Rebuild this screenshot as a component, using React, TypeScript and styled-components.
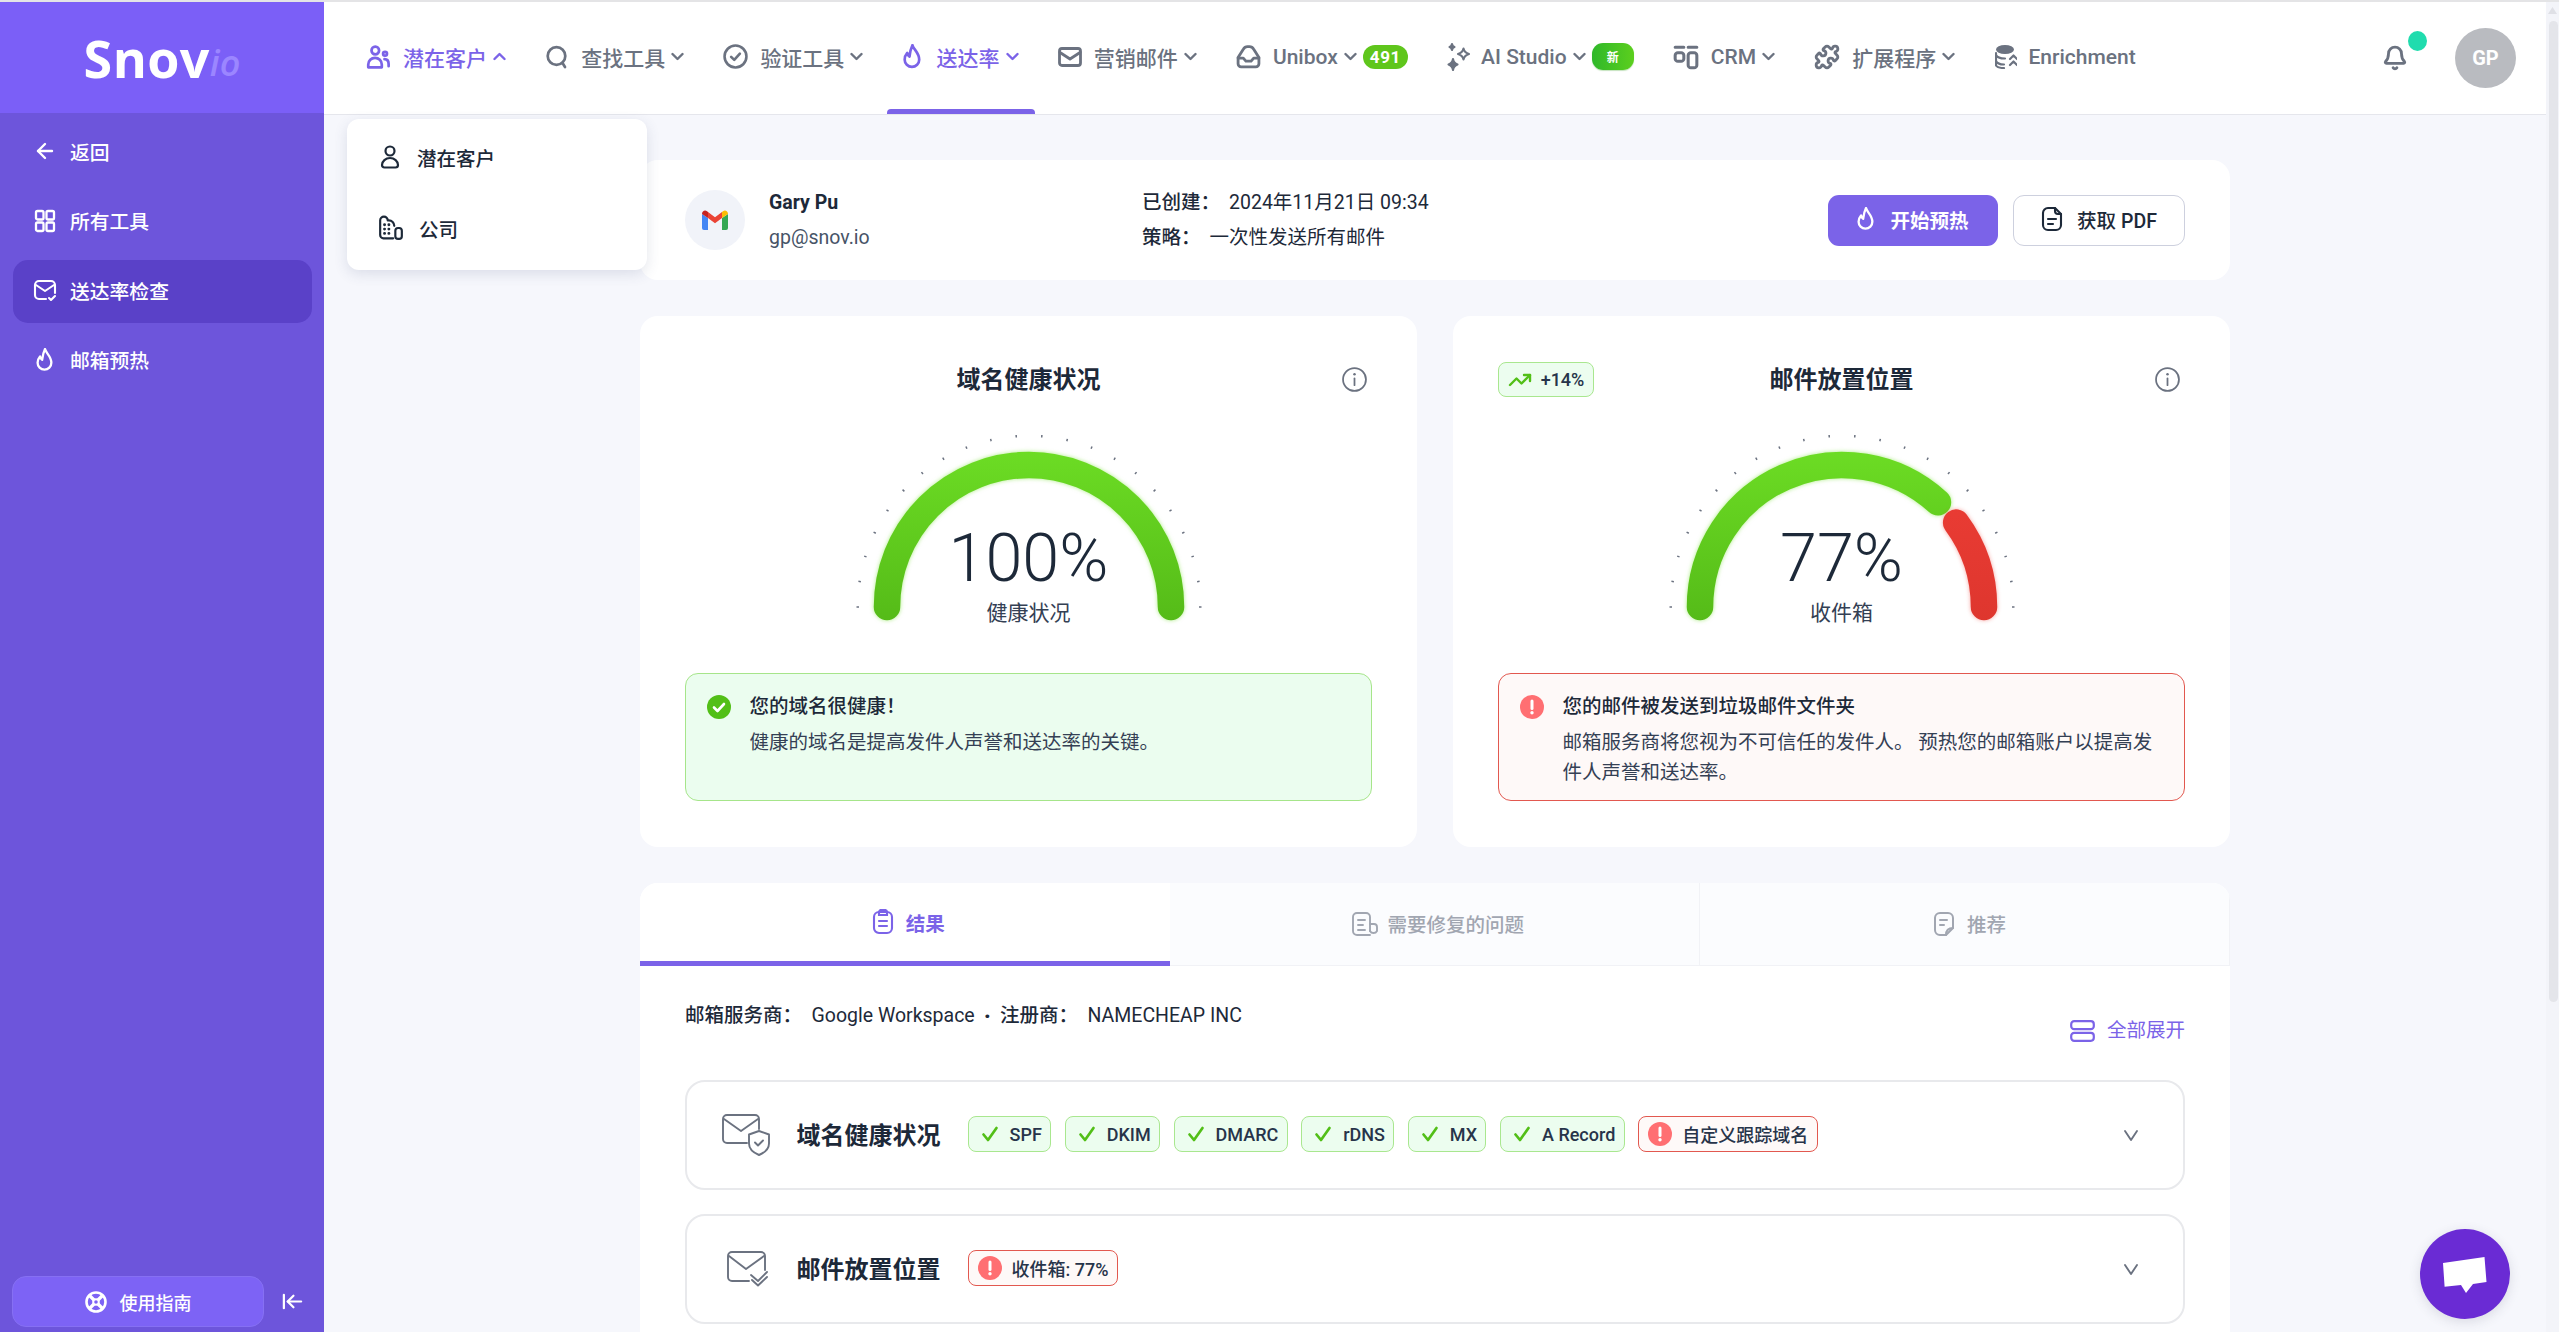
import React from 'react';
import styled, { createGlobalStyle } from 'styled-components';
import { ArrowLeft, ArrowLeftToLine, Bell, Puzzle, TrendingUp } from 'lucide-react';

const FONT = `Roboto, "Noto Sans CJK SC", "Noto Sans", sans-serif`;
const PURPLE = '#7b63e8';
const INK = '#1d2939';
const GREY = '#6b7280';

const Global = createGlobalStyle`
  html, body { margin: 0; padding: 0; height: 100%; overflow: hidden; background: #f6f7fc; }
  #root { height: 100%; }
  * { box-sizing: border-box; }
  body { font-family: ${FONT}; color: ${INK}; }
`;

const Page = styled.div`
  display: flex; flex-direction: column; height: 100vh; overflow: hidden; position: relative;
`;
const TopEdge = styled.div`height: 2px; flex: none; background: #e4e4e6;`;
const Shell = styled.div`display: flex; flex: 1; min-height: 0;`;

/* sidebar */
const Sidebar = styled.aside`
  width: 324px; flex: none; display: flex; flex-direction: column; background: #6d55db;
`;
const LogoBar = styled.div`
  height: 111px; flex: none; background: #7b5ff7; display: flex; align-items: center; justify-content: center;
`;
const LogoMain = styled.span`
  font-family: "Open Sans", sans-serif; font-weight: 700; font-size: 52px; line-height: 1; color: #fff; letter-spacing: .4px;
`;
const LogoIo = styled.span`
  font-family: "Open Sans", sans-serif; font-style: italic; font-weight: 600; font-size: 36px; line-height: 1;
  color: #9b86ff; align-self: flex-end; margin-bottom: 32px;
`;
const SideList = styled.nav`display: flex; flex-direction: column; gap: 6.5px; padding: 8px 12.5px 0;`;
const SideRow = styled.div<{ $active?: boolean }>`
  height: 63px; display: flex; align-items: center; gap: 13.5px; padding: 0 0 3px 20px; border-radius: 15px;
  color: #fff; font-size: 19.8px; font-weight: 500; background: ${p => (p.$active ? '#5a41c8' : 'transparent')};
`;
const SideIcon = styled.span`width: 24px; flex: none; display: flex; justify-content: center;`;
const SideFoot = styled.div`
  margin-top: auto; display: flex; align-items: center; gap: 17px; padding: 0 0 5px 12px;
`;
const GuideButton = styled.div`
  width: 252px; height: 51px; display: flex; align-items: center; justify-content: center; gap: 13px; border-radius: 14px;
  background: #7d63f5; border: 1px solid #8670f3; color: #fff; font-size: 18px; font-weight: 500;
`;
const Collapse = styled.div`color: #fff; display: flex;`;

/* main column */
const MainCol = styled.div`flex: 1; min-width: 0; display: flex; flex-direction: column; position: relative;`;
const TopNav = styled.header`
  height: 113px; flex: none; background: #fff; border-bottom: 1.5px solid #e5e6ec; display: flex; align-items: stretch; padding-left: 25px; position: relative;
`;
const NavItems = styled.div`display: flex; align-items: stretch; gap: 7.2px;`;
const NavItem = styled.div<{ $active?: boolean; $open?: boolean }>`
  position: relative; display: flex; align-items: center; padding: 0 16px 3px;
  color: ${p => (p.$active || p.$open ? PURPLE : GREY)}; font-size: 21px; font-weight: 500; white-space: nowrap;
  svg { flex: none; }
  ${p => p.$active && `&::after { content: ''; position: absolute; left: 0; right: 0; bottom: 0; height: 5px; background: ${PURPLE}; border-radius: 4px 4px 0 0; }`}
`;
const NavLabel = styled.span<{ $gap?: number }>`margin-left: ${p => p.$gap ?? 12}px;`;
const NavCaret = styled.svg`margin-left: 6px;`;
const CountBadge = styled.span`
  margin-left: 6px; height: 24px; padding: 0 7px; border-radius: 12px; background: #5fc61c; color: #fff; font-size: 17px; font-weight: 700;
  letter-spacing: .6px; display: flex; align-items: center;
`;
const NewBadge = styled.span`
  margin-left: 6px; width: 42px; height: 27px; border-radius: 11px; background: linear-gradient(90deg,#2fb82a,#5ccf1e); color: #fff;
  font-size: 12px; font-weight: 700; display: flex; align-items: center; justify-content: center; box-shadow: 0 1px 1px rgba(60,160,40,.3);
`;
const NavRight = styled.div`margin-left: auto; margin-right: 30px; display: flex; align-items: center; gap: 47px; color: ${GREY};`;
const BellBox = styled.div`position: relative; display: flex;`;
const BellDot = styled.span`position: absolute; top: -14px; right: -19px; width: 19px; height: 20px; border-radius: 50%; background: #20dcae;`;
const Avatar = styled.div`
  width: 61px; height: 60px; border-radius: 50%; background: #b9bbc0; color: #fff; font-weight: 700; font-size: 20px; display: flex; align-items: center; justify-content: center;
`;

const Dropdown = styled.div`
  position: absolute; top: 117px; left: 23px; width: 300px; height: 151px; background: #fff; border-radius: 12px;
  box-shadow: 0 4px 14px rgba(60,70,110,.14); display: flex; flex-direction: column; padding-top: 4px; z-index: 5;
`;
const DropRow = styled.div`
  height: 71px; display: flex; align-items: center; gap: 15px; padding: 0 0 3px 31px; font-size: 19.5px; font-weight: 500; color: ${INK};
`;

const Content = styled.main`flex: 1; min-height: 0; padding: 45px 0 0 316px; overflow: hidden;`;
const Column = styled.div`width: 1590px; display: flex; flex-direction: column;`;

const HeaderCard = styled.section`
  height: 120px; background: #fff; border-radius: 18px; display: flex; align-items: center; padding: 0 45px; font-size: 19.5px;
`;
const AccountLogo = styled.div`
  width: 60px; height: 60px; border-radius: 50%; background: #f1f3f9; display: flex; align-items: center; justify-content: center; flex: none;
`;
const Account = styled.div`margin-left: 24px; width: 373px; display: flex; flex-direction: column; gap: 6px; line-height: 29px;`;
const AccountName = styled.div`font-weight: 700;`;
const AccountMail = styled.div`color: #475467;`;
const Meta = styled.div`display: flex; flex-direction: column; gap: 6px; line-height: 29px;`;
const MetaLine = styled.div`display: flex;`;
const MetaLabel = styled.span`font-weight: 500;`;
const MetaValue = styled.span<{ $gap: number }>`margin-left: ${p => p.$gap}px; color: ${INK};`;
const Actions = styled.div`margin-left: auto; display: flex; gap: 15px;`;
const Button = styled.div<{ $primary?: boolean }>`
  height: 51px; display: flex; align-items: center; justify-content: center; gap: ${p => (p.$primary ? 15 : 14)}px; border-radius: 11px; font-size: 19.5px; padding-bottom: 2px;
  font-weight: ${p => (p.$primary ? 700 : 500)};
  width: ${p => (p.$primary ? 170 : 172)}px;
  background: ${p => (p.$primary ? PURPLE : '#fff')}; color: ${p => (p.$primary ? '#fff' : INK)};
  border: ${p => (p.$primary ? 'none' : '1.5px solid #cdd0de')};
`;

const GaugeRow = styled.div`display: grid; grid-template-columns: 777px 777px; gap: 36px; margin-top: 36px;`;
const GaugeCard = styled.section`height: 531px; background: #fff; border-radius: 18px; padding: 44px 45px 0; display: flex; flex-direction: column;`;
const GaugeHead = styled.div`display: grid; grid-template-columns: 1fr auto 1fr; align-items: center; height: 36px;`;
const GaugeTitle = styled.h2`margin: 0 0 4px; font-size: 24px; font-weight: 700; color: ${INK};`;
const HeadRight = styled.div`justify-self: end; display: flex; color: ${GREY}; margin-right: 5px;`;
const Trend = styled.div`
  justify-self: start; height: 35px; width: 96px; display: flex; align-items: center; justify-content: center; gap: 9px; border-radius: 8px;
  background: #ecfdef; border: 1px solid #a9e78f; font-size: 18px; font-weight: 500; color: #27344a;
`;
const GaugeWrap = styled.div`position: relative; width: 360px; height: 205px; align-self: center; margin-top: 29px;`;
const GaugeValue = styled.div`
  position: absolute; left: 0; right: 0; top: 93px; text-align: center; font-size: 66.5px; font-weight: 300; line-height: 80px; color: ${INK};
`;
const GaugeLabel = styled.div`
  position: absolute; left: 0; right: 0; top: 172.5px; text-align: center; font-size: 21px; line-height: 30px; color: #344054;
`;
const Alert = styled.div<{ $bad?: boolean }>`
  margin-top: 43px; height: 128px; border-radius: 13px; padding: 18px 22px 0 21px; display: grid; grid-template-columns: 24px 1fr; column-gap: 18.5px;
  background: ${p => (p.$bad ? '#fef9f8' : '#ebfdef')}; border: 1.5px solid ${p => (p.$bad ? '#e2584f' : '#a6e58a')};
  font-size: 19.5px; line-height: 30px; color: #344054;
`;
const AlertIcon = styled.div`display: flex; align-items: center; height: 30px;`;
const AlertTitle = styled.div`font-weight: 500; color: ${INK}; margin-bottom: 6px;`;

const Results = styled.section`margin-top: 36px; background: #fff; border-radius: 18px 18px 0 0; overflow: hidden; padding-bottom: 40px;`;
const Tabs = styled.div`display: grid; grid-template-columns: 530px 530px 1fr; height: 83px;`;
const Tab = styled.div<{ $active?: boolean; $shift?: number; $gap?: number }>`
  display: flex; align-items: center; justify-content: center; gap: ${p => p.$gap ?? 12}px; font-size: 19.5px;
  font-weight: ${p => (p.$active ? 700 : 500)}; padding: 0 0 ${p => (p.$active ? 0 : 1)}px ${p => p.$shift ?? 6.5}px;
  color: ${p => (p.$active ? PURPLE : '#a1a6b1')};
  background: ${p => (p.$active ? '#fff' : '#fbfcfe')};
  border-bottom: ${p => (p.$active ? `5px solid ${PURPLE}` : '1.5px solid #f1f2f6')};
  border-right: ${p => (p.$active ? 'none' : '1px solid #f1f2f6')};
`;
const ResultsBody = styled.div`padding: 0 45px;`;
const ProviderRow = styled.div`height: 114px; display: flex; justify-content: space-between; align-items: flex-start; padding-top: 35px; font-size: 19.5px; line-height: 30px;`;
const Provider = styled.div`display: flex;`;
const ProviderLabel = styled.span`font-weight: 500;`;
const ProviderValue = styled.span`margin-left: 9.5px;`;
const ProviderDot = styled.span`margin: 0 9px; font-weight: 700; font-size: 24px;`;
const ExpandAll = styled.div`display: flex; align-items: center; gap: 12px; color: ${PURPLE}; margin-top: 15px;`;
const AccordionList = styled.div`display: flex; flex-direction: column; gap: 24px;`;
const Accordion = styled.div`
  height: 110px; border: 2px solid #e8e9ec; border-radius: 20px; display: flex; align-items: center; padding-left: 35px; padding-right: 40px; background: #fff;
`;
const AccIcon = styled.div<{ $inset?: number }>`width: 74.5px; flex: none; display: flex; padding-left: ${p => p.$inset ?? 0}px;`;
const AccTitle = styled.h3`margin: 0 27px 4px 0; font-size: 24px; font-weight: 700; color: ${INK}; white-space: nowrap;`;
const Pills = styled.div`display: flex; gap: 13.6px; margin-bottom: 2px;`;
const Pill = styled.span<{ $bad?: boolean }>`
  height: 36px; display: flex; align-items: center; gap: ${p => (p.$bad ? 10 : 11)}px; padding: 0 ${p => (p.$bad ? 9 : 8.3)}px 0 ${p => (p.$bad ? 9 : 12)}px;
  border-radius: 8px; font-size: 18px; font-weight: 500; color: #27344a; white-space: nowrap;
  background: ${p => (p.$bad ? '#fef9f8' : '#ecfdef')}; border: 1.5px solid ${p => (p.$bad ? '#e2584f' : '#a9e78f')};
`;
const AccCaret = styled.div`margin-left: auto; display: flex; color: ${GREY};`;

const Scrollbar = styled.div`width: 13px; flex: none; background: #f3f4f9; display: flex; flex-direction: column; align-items: center; padding-top: 5px;`;
const ScrollThumb = styled.div`width: 9px; height: 981px; margin-top: 7px; border-radius: 5px; background: #e4e5ea; margin-left: 1px;`;
const ChatButton = styled.div`
  position: absolute; left: 2420px; top: 1229px; width: 90px; height: 90px; border-radius: 50%; background: #6a2bd4; box-shadow: 0 3px 12px rgba(60,60,90,.15); display: flex;
`;

/* icons */
const Ico: React.FC<{ s?: number; sw?: number; children: React.ReactNode }> = ({ s = 24, sw = 2, children }) => (
  <svg width={s} height={s} viewBox="0 0 24 24" fill="none" stroke="currentColor" strokeWidth={sw} strokeLinecap="round" strokeLinejoin="round">{children}</svg>
);
const Caret = ({ up }: { up?: boolean }) => (
  <NavCaret width="13" height="9" viewBox="0 0 13 9" fill="none" stroke="currentColor" strokeWidth="2.4" strokeLinecap="round" strokeLinejoin="round">
    <path d={up ? 'M1.5 7 6.5 2l5 5' : 'M1.5 2l5 5 5-5'} />
  </NavCaret>
);
const FlameIcon = ({ w = 19, sw = 2.2 }: { w?: number; sw?: number }) => (
  <svg width={w} height={(w * 22) / 17} viewBox="4 1 17 22" fill="none" stroke="currentColor" strokeWidth={sw} strokeLinecap="round" strokeLinejoin="round">
    <path d="M12.500 2c.6 3.600 6 6.600 6 13a6.500 6.500 0 0 1-13 0c0-2.500 1-4.500 2.300-6 .3 1.500 1 2.600 2 3.200C10.200 9 11 5 12.500 2z" />
  </svg>
);
const UsersIcon = () => (
  <Ico s={26} sw={2.500}><circle cx="9.500" cy="6" r="3.500" /><path d="M3 21.500v-2.500a6 6 0 0 1 12.500 0v2.500H3z" /><circle cx="18.500" cy="9" r="1.800" /><path d="M18 14c2.500 0 3.800 1.800 3.800 4.500v2" /></Ico>
);
const SearchIcon = () => <Ico s={24} sw={2.700}><circle cx="11.500" cy="11" r="8.800" /><path d="M17.500 18l2.500 4" /></Ico>;
const VerifyIcon = () => <Ico s={25} sw={2.500}><circle cx="12" cy="12" r="10.500" /><path d="M7.800 12.300l3 3 5.400-6" /></Ico>;
const MailIcon = () => <Ico s={24} sw={2.800}><rect x="1.500" y="3.500" width="21" height="17" rx="2.500" /><path d="M2 7.500l10 6.500 10-6.500" /></Ico>;
const UniboxIcon = () => <Ico s={25} sw={2.700}><path d="M2 13 7 5c1-1.700 2-2.500 4-2.500h2c2 0 3 .8 4 2.500l5 8v6a3 3 0 0 1-3 3H5a3 3 0 0 1-3-3v-6z" /><path d="M2 13.500h5l2.500 3h5l2.500-3h5" /></Ico>;
const SparkIcon = () => (
  <svg width="25" height="29" viewBox="0 0 25 29" fill="none" stroke="currentColor" strokeWidth="2.100" strokeLinejoin="round">
    <path d="M16.500 6.500c.7 3 2 4.500 5.500 5.500-3.500 1-4.800 2.500-5.500 5.500-.7-3-2-4.500-5.500-5.500 3.500-1 4.800-2.500 5.500-5.500z" />
    <path fill="currentColor" d="M6 17c.5 3 1.500 4.500 4.500 5.500C7.500 23.500 6.500 25 6 28c-.5-3-1.500-4.500-4.500-5.500C4.500 21.500 5.500 20 6 17z" />
    <path fill="currentColor" d="M5 2c.3 1.700.8 2.500 2.500 3-1.700.5-2.200 1.300-2.500 3-.3-1.700-.8-2.500-2.500-3C4.200 4.500 4.700 3.700 5 2z" />
  </svg>
);
const CrmIcon = () => <Ico s={26} sw={2.800}><path d="M2 3h8M14 3h8" /><rect x="2" y="8" width="8" height="8" rx="2.500" /><rect x="14" y="8" width="8" height="14" rx="2.500" /></Ico>;
const EnrichIcon = () => (
  <svg width="22" height="25" viewBox="0 0 22 25" fill="none" stroke="currentColor" strokeWidth="2.200" strokeLinecap="round" strokeLinejoin="round">
    <ellipse cx="10" cy="5.500" rx="9" ry="4.500" fill="currentColor" stroke="none" />
    <path d="M1 11c1 2.500 5 3.500 9 3.500M1 17c1 2.500 5 3.500 8 3.500M1 9v12.500c1 1.500 4 2.500 8 2.500" />
    <path d="M15 15l3.500-3.500L22 15M15 21l3.500-3.500L22 21" />
  </svg>
);
const UserIcon = () => <Ico s={24} sw={2.200}><circle cx="12" cy="6" r="4.500" /><path d="M4 20a8 7 0 0 1 16 0c0 1.500-.8 2.500-2.500 2.500h-11C4.800 22.500 4 21.500 4 20z" /></Ico>;
const BuildingIcon = () => (
  <Ico s={26} sw={2}><path d="M14 21.500H5a3 3 0 0 1-3-3V5a3.500 3.500 0 0 1 7 0h1a5 5 0 0 1 5 5" /><rect x="16" y="12" width="6" height="10" rx="2.500" /><path d="M6 9h.1M10 9h.1M6 13h.1M10 13h.1M6 17h.1M10 17h.1" strokeWidth="2.600" /></Ico>
);
const LifeIcon = () => (
  <svg width="22" height="22" viewBox="0 0 22 22" fill="none" stroke="currentColor" strokeWidth="2.600">
    <circle cx="11" cy="11" r="9.500" /><circle cx="11" cy="11" r="2.800" strokeWidth="2" /><path d="M4.500 4.500l4.500 4.500M17.500 4.500 13 9M4.500 17.500 9 13M17.500 17.500 13 13" strokeWidth="3.200" />
  </svg>
);
const GridIcon = () => (
  <Ico s={24} sw={2.300}><rect x="3" y="2" width="7.500" height="8.500" rx="1.500" /><rect x="13.500" y="2" width="7.500" height="8.500" rx="1.500" /><rect x="3" y="13.500" width="7.500" height="8.500" rx="1.500" /><rect x="13.500" y="13.500" width="7.500" height="8.500" rx="1.500" /></Ico>
);
const MailCheckIcon = () => (
  <Ico s={24} sw={2.100}><path d="M13 21H6a4 4 0 0 1-4-4V7a4 4 0 0 1 4-4h12a4 4 0 0 1 4 4v8" /><path d="M3 7l9 6 9-6" /><path d="M16 20l2 2 4-4" /></Ico>
);
const ResultIcon = () => (
  <svg width="22" height="26" viewBox="0 0 22 26" fill="none" stroke="currentColor" strokeWidth="2.100" strokeLinecap="round">
    <rect x="2" y="3" width="18" height="21" rx="5" /><path d="M7 3c0-1 1-2 2-2h4c1 0 2 1 2 2v3H7zM7 12h8M7 17h8" />
  </svg>
);
const PdfIcon = () => (
  <svg width="22" height="26" viewBox="0 0 22 26" fill="none" stroke="currentColor" strokeWidth="2.100" strokeLinecap="round" strokeLinejoin="round">
    <path d="M14 2H7a5 5 0 0 0-5 5v12a5 5 0 0 0 5 5h8a5 5 0 0 0 5-5V8z" /><path d="M14 2v3a3 3 0 0 0 3 3h3M7 13h8M7 18h5" />
  </svg>
);
const ClipIcon = () => (
  <svg width="27" height="26" viewBox="0 0 27 26" fill="none" stroke="currentColor" strokeWidth="1.900" strokeLinecap="round" strokeLinejoin="round">
    <path d="M19 24H6a4 4 0 0 1-4-4V6a4 4 0 0 1 4-4h9a4 4 0 0 1 4 4v14" /><path d="M19 13h4a3 3 0 0 1 3 3v4a4 4 0 0 1-7 0" /><path d="M7 9h7M7 14h5M7 19h7" />
  </svg>
);
const NoteIcon = () => (
  <svg width="22" height="26" viewBox="0 0 22 26" fill="none" stroke="currentColor" strokeWidth="2" strokeLinecap="round" strokeLinejoin="round">
    <path d="M13 24H7a5 5 0 0 1-5-5V7a5 5 0 0 1 5-5h8a5 5 0 0 1 5 5v10z" /><path d="M7 9h7M7 14h4" /><path d="M13 24c0-5 2-7 7-7" />
  </svg>
);
const InfoIcon = () => <Ico s={25} sw={1.700}><circle cx="12" cy="12" r="11" /><path d="M12 11v6.500" /><path d="M12 7h.01" strokeWidth="2.400" /></Ico>;
const OkDot = () => (
  <svg width="24" height="24" viewBox="0 0 24 24"><circle cx="12" cy="12" r="12" fill="#52bf17" /><path d="M7 12.500l3.500 3.500 6.500-7" fill="none" stroke="#fff" strokeWidth="2.600" strokeLinecap="round" strokeLinejoin="round" /></svg>
);
const BadDot = () => (
  <svg width="24" height="24" viewBox="0 0 24 24"><circle cx="12" cy="12" r="12" fill="#ff6f72" /><path d="M12 6v7.500" stroke="#fff" strokeWidth="3" strokeLinecap="round" /><circle cx="12" cy="17.800" r="1.700" fill="#fff" /></svg>
);
const CheckMark = () => (
  <svg width="18" height="18" viewBox="0 0 18 18" fill="none" stroke="#52bf17" strokeWidth="2.700" strokeLinecap="round" strokeLinejoin="round"><path d="M2.500 9.500l4.500 5.500 8.500-12" /></svg>
);
const Gmail = () => (
  <svg width="26" height="20" viewBox="0 0 26 20">
    <path d="M0 4v14a2 2 0 0 0 2 2h4V8z" fill="#4285f4" />
    <path d="M26 4v14a2 2 0 0 1-2 2h-4V8z" fill="#34a853" />
    <path d="M6 8V2l7 5.200L20 2v6l-7 5.200z" fill="#ea4335" />
    <path d="M0 4c0-3 3-4.500 5-2.800L6 2v6z" fill="#c5221f" />
    <path d="M26 4c0-3-3-4.500-5-2.800L20 2v6z" fill="#fbbc04" />
  </svg>
);
const MailGlyph = ({ tail }: { tail: 'shield' | 'check' }) => tail === 'shield' ? (
  <svg width="48" height="42" viewBox="0 0 48 42" fill="none" stroke="#6b7280" strokeWidth="1.900" strokeLinecap="round" strokeLinejoin="round">
    <path d="M25 29H5a4 4 0 0 1-4-4V5a4 4 0 0 1 4-4h28a4 4 0 0 1 4 4v10" /><path d="M2 5l17 12L36 5" />
    <path d="M37 17l10 3.500v9c0 5.500-4 9-10 11.500-6-2.500-10-6-10-11.500v-9z" /><path d="M33 28.500l3 3 5-5" />
  </svg>
) : (
  <svg width="42" height="36" viewBox="0 0 42 36" fill="none" stroke="#6b7280" strokeWidth="1.900" strokeLinecap="round" strokeLinejoin="round">
    <path d="M22 30H5a4 4 0 0 1-4-4V5a4 4 0 0 1 4-4h29a4 4 0 0 1 4 4v14" /><path d="M2 5l17 13L37 5" />
    <path d="M24 24l7 6 9-9M25 29l6 5.500 9-8.500" />
  </svg>
);

/* gauge */
const polar = (r: number, deg: number, cx = 180, cy = 182) => {
  const a = (deg * Math.PI) / 180;
  return [cx + r * Math.cos(a), cy - r * Math.sin(a)];
};
const arc = (from: number, to: number, r = 142) => {
  const [x1, y1] = polar(r, from);
  const [x2, y2] = polar(r, to);
  return `M${x1} ${y1} A${r} ${r} 0 0 1 ${x2} ${y2}`;
};
const Ticks = styled.g`stroke: #6b7280; stroke-width: 1.5;`;
const Gauge: React.FC<{ id: string; value: string; label: string; segments: { from: number; to: number; top: string; bottom: string; glow: string }[] }> = ({ id, value, label, segments }) => (
  <GaugeWrap>
    <svg width="360" height="205" viewBox="0 0 360 205" fill="none">
      <Ticks>
        {Array.from({ length: 22 }, (_, i) => {
          const deg = 180 - (i * 180) / 21;
          const [a, b] = polar(170, deg);
          const [c, d] = polar(172.500, deg);
          return <line key={i} x1={a} y1={b} x2={c} y2={d} />;
        })}
      </Ticks>
      <defs>
        {segments.map((s, i) => (
          <linearGradient key={i} id={`${id}-${i}`} gradientUnits="userSpaceOnUse" x1="0" y1="27" x2="0" y2="196">
            <stop offset="0" stopColor={s.top} /><stop offset="1" stopColor={s.bottom} />
          </linearGradient>
        ))}
      </defs>
      {segments.map((s, i) => (
        <path key={i} d={arc(s.from, s.to)} stroke={`url(#${id}-${i})`} strokeWidth="26.500" strokeLinecap="round" style={{ filter: `drop-shadow(0 0 2px ${s.glow})` }} />
      ))}
    </svg>
    <GaugeValue>{value}</GaugeValue>
    <GaugeLabel>{label}</GaugeLabel>
  </GaugeWrap>
);

const pills = ['SPF', 'DKIM', 'DMARC', 'rDNS', 'MX', 'A Record'];
const AccChevron = () => <Ico s={24} sw={1.900}><path d="M6 8l6 9 6-9" /></Ico>;

export default function App() {
  return (
    <Page>
      <Global />
      <TopEdge />
      <Shell>
        <Sidebar>
          <LogoBar><LogoMain>Snov</LogoMain><LogoIo>io</LogoIo></LogoBar>
          <SideList>
            <SideRow><SideIcon><ArrowLeft size={24} strokeWidth={2.400} /></SideIcon>返回</SideRow>
            <SideRow><SideIcon><GridIcon /></SideIcon>所有工具</SideRow>
            <SideRow $active><SideIcon><MailCheckIcon /></SideIcon>送达率检查</SideRow>
            <SideRow><SideIcon><FlameIcon w={18} sw={2.200} /></SideIcon>邮箱预热</SideRow>
          </SideList>
          <SideFoot>
            <GuideButton><LifeIcon />使用指南</GuideButton>
            <Collapse><ArrowLeftToLine size={23} strokeWidth={2.300} /></Collapse>
          </SideFoot>
        </Sidebar>
        <MainCol>
          <TopNav>
            <NavItems>
              <NavItem $open><UsersIcon /><NavLabel>潜在客户</NavLabel><Caret up /></NavItem>
              <NavItem><SearchIcon /><NavLabel>查找工具</NavLabel><Caret /></NavItem>
              <NavItem><VerifyIcon /><NavLabel>验证工具</NavLabel><Caret /></NavItem>
              <NavItem $active><FlameIcon w={19} sw={2.400} /><NavLabel $gap={15}>送达率</NavLabel><Caret /></NavItem>
              <NavItem><MailIcon /><NavLabel>营销邮件</NavLabel><Caret /></NavItem>
              <NavItem><UniboxIcon /><NavLabel>Unibox</NavLabel><Caret /><CountBadge>491</CountBadge></NavItem>
              <NavItem><SparkIcon /><NavLabel $gap={9}>AI Studio</NavLabel><Caret /><NewBadge>新</NewBadge></NavItem>
              <NavItem><CrmIcon /><NavLabel>CRM</NavLabel><Caret /></NavItem>
              <NavItem><Puzzle size={26} strokeWidth={2.600} /><NavLabel>扩展程序</NavLabel><Caret /></NavItem>
              <NavItem><EnrichIcon /><NavLabel>Enrichment</NavLabel></NavItem>
            </NavItems>
            <NavRight>
              <BellBox><Bell size={26} strokeWidth={2.600} /><BellDot /></BellBox>
              <Avatar>GP</Avatar>
            </NavRight>
          </TopNav>
          <Dropdown>
            <DropRow><UserIcon />潜在客户</DropRow>
            <DropRow><BuildingIcon />公司</DropRow>
          </Dropdown>
          <Content>
            <Column>
              <HeaderCard>
                <AccountLogo><Gmail /></AccountLogo>
                <Account>
                  <AccountName>Gary Pu</AccountName>
                  <AccountMail>gp@snov.io</AccountMail>
                </Account>
                <Meta>
                  <MetaLine><MetaLabel>已创建：</MetaLabel><MetaValue $gap={9}>2024年11月21日 09:34</MetaValue></MetaLine>
                  <MetaLine><MetaLabel>策略：</MetaLabel><MetaValue $gap={9}>一次性发送所有邮件</MetaValue></MetaLine>
                </Meta>
                <Actions>
                  <Button $primary><FlameIcon w={18} sw={2.200} />开始预热</Button>
                  <Button><PdfIcon />获取 PDF</Button>
                </Actions>
              </HeaderCard>
              <GaugeRow>
                <GaugeCard>
                  <GaugeHead>
                    <span />
                    <GaugeTitle>域名健康状况</GaugeTitle>
                    <HeadRight><InfoIcon /></HeadRight>
                  </GaugeHead>
                  <Gauge id="health" value="100%" label="健康状况" segments={[{ from: 180, to: 0, top: '#6cdc24', bottom: '#55bb18', glow: 'rgba(108,220,36,.55)' }]} />
                  <Alert>
                    <AlertIcon><OkDot /></AlertIcon>
                    <div>
                      <AlertTitle>您的域名很健康！</AlertTitle>
                      <div>健康的域名是提高发件人声誉和送达率的关键。</div>
                    </div>
                  </Alert>
                </GaugeCard>
                <GaugeCard>
                  <GaugeHead>
                    <Trend><TrendingUp size={24} color="#52bf17" strokeWidth={2.400} />+14%</Trend>
                    <GaugeTitle>邮件放置位置</GaugeTitle>
                    <HeadRight><InfoIcon /></HeadRight>
                  </GaugeHead>
                  <Gauge id="place" value="77%" label="收件箱" segments={[
                    { from: 180, to: 47.500, top: '#6cdc24', bottom: '#55bb18', glow: 'rgba(108,220,36,.55)' },
                    { from: 36.500, to: 0, top: '#ee3e36', bottom: '#de362e', glow: 'rgba(235,60,50,.45)' },
                  ]} />
                  <Alert $bad>
                    <AlertIcon><BadDot /></AlertIcon>
                    <div>
                      <AlertTitle>您的邮件被发送到垃圾邮件文件夹</AlertTitle>
                      <div>邮箱服务商将您视为不可信任的发件人。 预热您的邮箱账户以提高发件人声誉和送达率。</div>
                    </div>
                  </Alert>
                </GaugeCard>
              </GaugeRow>
              <Results>
                <Tabs>
                  <Tab $active><ResultIcon />结果</Tab>
                  <Tab $gap={9}><ClipIcon />需要修复的问题</Tab>
                  <Tab $shift={10}><NoteIcon />推荐</Tab>
                </Tabs>
                <ResultsBody>
                  <ProviderRow>
                    <Provider>
                      <ProviderLabel>邮箱服务商：</ProviderLabel><ProviderValue>Google Workspace</ProviderValue>
                      <ProviderDot>·</ProviderDot>
                      <ProviderLabel>注册商：</ProviderLabel><ProviderValue>NAMECHEAP INC</ProviderValue>
                    </Provider>
                    <ExpandAll>
                      <svg width="25" height="22" viewBox="0 0 25 22" fill="none" stroke="currentColor" strokeWidth="2.200"><rect x="1.200" y="1.200" width="22.600" height="8" rx="3" /><rect x="1.200" y="12.800" width="22.600" height="8" rx="3" /></svg>
                      全部展开
                    </ExpandAll>
                  </ProviderRow>
                  <AccordionList>
                    <Accordion>
                      <AccIcon><MailGlyph tail="shield" /></AccIcon>
                      <AccTitle>域名健康状况</AccTitle>
                      <Pills>
                        {pills.map(p => <Pill key={p}><CheckMark />{p}</Pill>)}
                        <Pill $bad><BadDot />自定义跟踪域名</Pill>
                      </Pills>
                      <AccCaret><AccChevron /></AccCaret>
                    </Accordion>
                    <Accordion>
                      <AccIcon $inset={5}><MailGlyph tail="check" /></AccIcon>
                      <AccTitle>邮件放置位置</AccTitle>
                      <Pills><Pill $bad><BadDot />收件箱: 77%</Pill></Pills>
                      <AccCaret><AccChevron /></AccCaret>
                    </Accordion>
                  </AccordionList>
                </ResultsBody>
              </Results>
            </Column>
          </Content>
        </MainCol>
        <Scrollbar>
          <svg width="9" height="7" viewBox="0 0 9 7"><path d="M4.500 0 9 7H0z" fill="#dfe0e6" /></svg>
          <ScrollThumb />
        </Scrollbar>
      </Shell>
      <ChatButton>
        <svg width="90" height="90" viewBox="0 0 90 90"><path d="M23 34 64.500 28 66.500 53 53 55 46 64 41 56 24.600 57.700z" fill="#fff" /></svg>
      </ChatButton>
    </Page>
  );
}
